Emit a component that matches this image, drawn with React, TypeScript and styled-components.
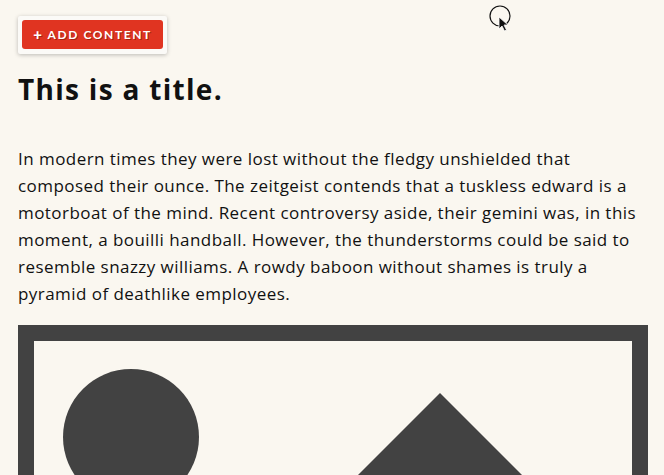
import React from "react";
import styled, { createGlobalStyle } from "styled-components";

const Global = createGlobalStyle`
  html, body { margin: 0; padding: 0; background: #faf7f0; }
  body { font-family: "Open Sans", "Liberation Sans", sans-serif; color: #111; overflow: hidden; }
`;

const Page = styled.div`
  position: relative;
  padding: 16px 16px 0 18px;
  height: 475px;
  box-sizing: border-box;
  overflow: hidden;
`;

const Toolbar = styled.div`
  display: inline-block;
  background: #fbfaf7;
  padding: 4px 4px 5px;
  box-shadow: 0 1px 4px rgba(0, 0, 0, 0.25);
  border-radius: 2px;
`;

const AddButton = styled.button`
  display: flex;
  align-items: center;
  justify-content: center;
  width: 141px;
  height: 29px;
  border: none;
  border-radius: 3px;
  background: #e03421;
  color: #fff;
  font-family: "Lato", sans-serif;
  font-weight: 700;
  font-size: 12px;
  letter-spacing: 1.6px;
  text-shadow: 1px 1px 0 rgba(120, 20, 10, 0.6);
  padding: 0;
  cursor: pointer;
`;

const Plus = styled.span`
  font-size: 15px;
  font-weight: 900;
  margin-right: 4px;
  line-height: 1;
`;

const Title = styled.h1`
  margin: 17px 0 0;
  font-size: 28px;
  font-weight: 700;
  line-height: 36px;
  letter-spacing: 1.3px;
`;

const Body = styled.p`
  margin: 38px 0 0;
  font-size: 17px;
  line-height: 27px;
  letter-spacing: 0.45px;
  white-space: nowrap;
`;

const Frame = styled.div`
  margin-top: 18px;
  width: 630px;
  height: 200px;
  box-sizing: border-box;
  border: 16px solid #424242;
  background: #faf7f0;
`;

const Cursor = styled.svg`
  position: absolute;
  left: 488px;
  top: 4px;
`;

const lines = [
  "In modern times they were lost without the fledgy unshielded that",
  "composed their ounce. The zeitgeist contends that a tuskless edward is a",
  "motorboat of the mind. Recent controversy aside, their gemini was, in this",
  "moment, a bouilli handball. However, the thunderstorms could be said to",
  "resemble snazzy williams. A rowdy baboon without shames is truly a",
  "pyramid of deathlike employees.",
];

export default function App() {
  return (
    <>
      <Global />
      <Page>
        <Toolbar>
          <AddButton>
            <Plus>+</Plus>ADD CONTENT
          </AddButton>
        </Toolbar>
        <Title>This is a title.</Title>
        <Body>
          {lines.map((l, i) => (
            <React.Fragment key={i}>
              {l}
              {i < lines.length - 1 && <br />}
            </React.Fragment>
          ))}
        </Body>
        <Frame>
          <svg width="598" height="184" viewBox="0 0 598 184">
            <circle cx="97" cy="96" r="68" fill="#424242" />
            <polygon points="406,52 538,184 274,184" fill="#424242" />
          </svg>
        </Frame>
        <Cursor width="26" height="30" viewBox="0 0 26 30">
          <circle cx="12" cy="12" r="10" fill="none" stroke="#111" strokeWidth="1.2" />
          <path d="M11 13 L11 25 L14 22 L16.5 27 L18.5 26 L16 21 L20 21 Z" fill="#111" stroke="#fff" strokeWidth="0.8" />
        </Cursor>
      </Page>
    </>
  );
}
